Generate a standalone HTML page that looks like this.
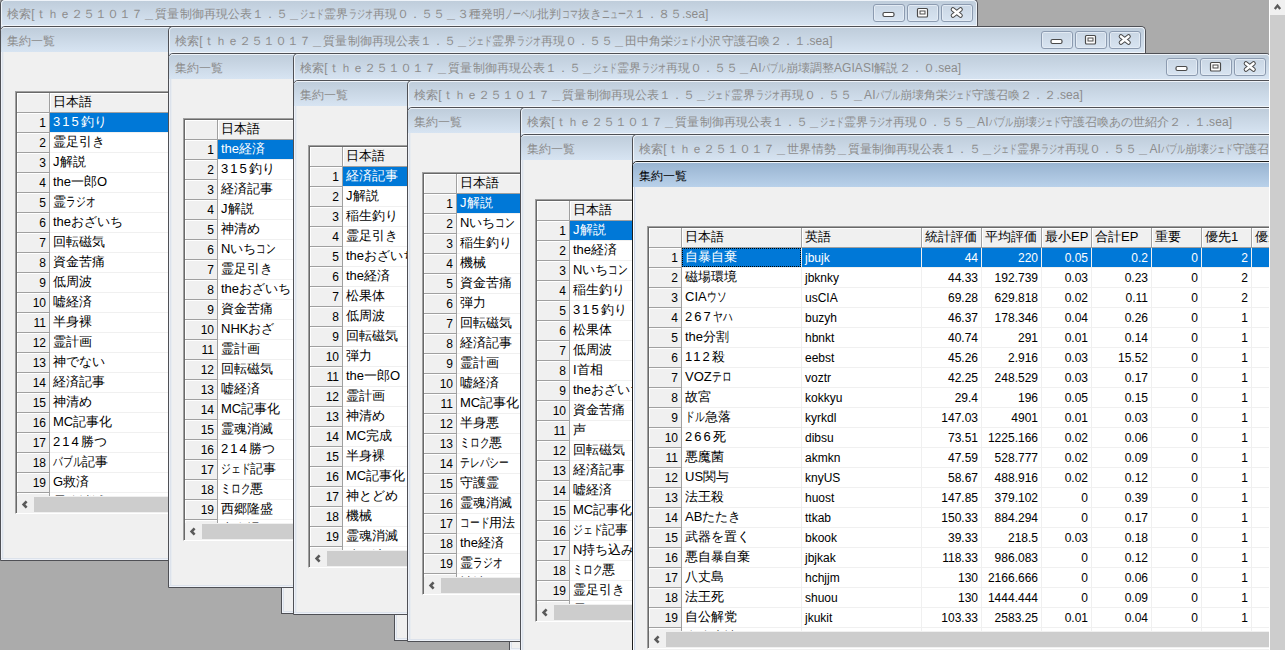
<!DOCTYPE html><html><head><meta charset="utf-8"><style>
*{box-sizing:border-box;margin:0;padding:0}
html,body{width:1285px;height:650px;overflow:hidden;background:#ababab;font-family:"Liberation Sans",sans-serif;font-size:12px;color:#000}
.a{position:absolute}
.pf{position:absolute;width:978px;height:60px;border:1px solid #4f5055;border-bottom:none;border-radius:5px 5px 0 0;overflow:hidden;
 background:linear-gradient(#bfcddb,#d7e4f2) 0 1px/100% 25px no-repeat,#d7e4f2}
.pf .in{position:absolute;left:0;top:0;right:0;height:26px;border:1px solid #eef3f9;border-bottom:none;border-radius:4px 4px 0 0}
.pf .hl{position:absolute;left:0;right:0;top:25px;height:1px;background:#f2f6fb}
.tt{position:absolute;left:6px;top:7px;letter-spacing:0.08px;white-space:nowrap;color:#8c8c8c;line-height:14px}
.btn{position:absolute;top:4px;width:32px;height:18px;border:1px solid #8c9bb0;border-radius:3px;background:linear-gradient(#c9d6e4,#d8e4f1);box-shadow:inset 0 0 0 1px #e3ebf4}
.cf{position:absolute;width:978px;height:535px;border:1px solid #4f5055;border-radius:5px 5px 0 0;overflow:hidden;background:#f0f0f0}
.cf .tb{position:absolute;left:0;top:0;right:0;height:25px;background:linear-gradient(#bfcddb,#d7e4f2);border-top:1px solid #eef3f9;border-radius:4px 4px 0 0}
.cf.act .tb{background:linear-gradient(#99b4d1,#b9d1ea)}
.cf.act{border-color:#1c1c1c}
.cf.act .side{border-left-color:#fff;background:#cdd5e3;border-right-color:#e8eef9}
.cf .side{position:absolute;left:0;top:25px;bottom:0;width:3px;border-left:1px solid #eef2f9;border-right:1px solid #e8ecf0;background:#dce2eb}
.cf .bot{position:absolute;left:0;right:0;bottom:0;height:2px;border-bottom:1px solid #eef2f9;background:#dce2eb}
.ct{position:absolute;left:6px;top:7px;white-space:nowrap;color:#8c8c8c;line-height:14px}
.cf.act .ct{color:#000}
.gw{position:absolute;left:14px;top:64px;height:423px;border-bottom:1px solid #fff;border-top:1px solid #a0a0a0;border-left:1px solid #a0a0a0}
.grid{position:relative;height:421px;border-top:1px solid #696969;border-left:1px solid #696969;background:#fff;overflow:hidden}
.rh{position:absolute;left:0;width:33px;background:#f0f0f0;border-right:1px solid #a0a0a0;border-bottom:1px solid #a0a0a0;text-align:right;padding-right:3px;line-height:21px;height:20px;box-shadow:inset 1px 1px 0 #fff}
.hc{position:absolute;top:0;height:20px;background:#f0f0f0;box-shadow:inset 1px 1px 0 #fff;border-right:1px solid #a0a0a0;border-bottom:1px solid #a0a0a0;padding-left:3px;line-height:17px;font-size:13px;white-space:nowrap;overflow:hidden}
.dc{position:absolute;height:20px;border-right:1px solid #f0f0f0;border-bottom:1px solid #f0f0f0;line-height:21px;white-space:nowrap;overflow:hidden;padding-left:3px}
.dc.r{text-align:right;padding-left:0;padding-right:3px}
.sel{background:#0078d7;color:#fff}
.jp{font-size:13px;padding-left:3px;line-height:17px}
.kk{display:inline-block;transform:scaleX(.75);transform-origin:0 0}
.dg{letter-spacing:2px}
.hk{display:inline-block;transform:scaleX(.667);transform-origin:0 0;letter-spacing:0}
.fr{position:absolute;left:0;top:0;border:1px dotted #000}

.hs{position:absolute;left:0;right:0;top:403px;height:17px;background:#f0f0f0}
.hs .th{position:absolute;left:17px;top:1px;bottom:1px;right:0;background:#cdcdcd}
</style></head><body><div class="a" style="left:281px;top:587px;width:13px;height:27px;background:#f0f0f0;border-left:1px solid #4f5055;border-bottom:1px solid #4f5055;box-shadow:inset 1px -1px 0 #eef2f9, inset 2px -2px 0 #dce2eb"></div><div class="a" style="left:394px;top:614px;width:14px;height:27px;background:#f0f0f0;border-left:1px solid #4f5055;border-bottom:1px solid #4f5055;box-shadow:inset 1px -1px 0 #eef2f9, inset 2px -2px 0 #dce2eb"></div><div class="a" style="left:509px;top:641px;width:12px;height:10px;background:#f0f0f0;border-left:1px solid #4f5055;border-bottom:1px solid #4f5055;box-shadow:inset 1px -1px 0 #eef2f9, inset 2px -2px 0 #dce2eb"></div><div class="pf" style="left:0px;top:-1px"><div class="in"></div><div class="hl"></div><div class="tt">検索[ｔｈｅ２５１０１７＿質量制御再現公表１．５＿<span class="hk" style="margin-right:-12px">ジェド</span>霊界<span class="hk" style="margin-right:-12px">ラジオ</span>再現０．５５＿３種発明<span class="hk" style="margin-right:-16px">ノーベル</span>批判<span class="hk" style="margin-right:-8px">コマ</span>抜き<span class="hk" style="margin-right:-16px">ニュース</span>１．８５.sea]</div><div class="btn" style="left:872px;top:4px"></div><div class="btn" style="left:906px;top:4px"></div><div class="btn" style="left:940px;top:4px"></div><svg class="a" style="left:872px;top:4px" width="32" height="18"><rect x="10" y="8.5" width="11" height="4" rx="1.5" fill="#fff" stroke="#4a4a4a" stroke-width="1.2"/></svg><svg class="a" style="left:906px;top:4px" width="32" height="18"><rect x="10.5" y="4.5" width="10" height="8.5" rx="1" fill="#fff" stroke="#4a4a4a" stroke-width="1.2"/><rect x="13" y="7" width="5" height="3" fill="none" stroke="#4a4a4a" stroke-width="1"/></svg><svg class="a" style="left:940px;top:4px" width="32" height="18"><path d="M12 5.5 L19.5 11.5 M19.5 5.5 L12 11.5" stroke="#4a4a4a" stroke-width="4.6" stroke-linecap="round"/><path d="M12 5.5 L19.5 11.5 M19.5 5.5 L12 11.5" stroke="#fff" stroke-width="2.6" stroke-linecap="round"/></svg></div><div class="cf" style="left:0px;top:26px"><div class="tb"></div><div class="side"></div><div class="bot"></div><div class="ct">集約一覧</div><div class="gw" style="width:354px"><div class="grid"><div class="rh" style="top:0;height:20px"></div><div class="hc" style="left:33px;width:120px">日本語</div><div class="rh" style="top:20px">1</div><div class="dc jp sel" style="left:33px;top:20px;width:120px"><span class="dg">315</span>釣り</div><div class="rh" style="top:40px">2</div><div class="dc jp" style="left:33px;top:40px;width:120px">霊足引き</div><div class="rh" style="top:60px">3</div><div class="dc jp" style="left:33px;top:60px;width:120px">J解説</div><div class="rh" style="top:80px">4</div><div class="dc jp" style="left:33px;top:80px;width:120px">the一郎O</div><div class="rh" style="top:100px">5</div><div class="dc jp" style="left:33px;top:100px;width:120px">霊<span class="kk" style="margin-right:-9.75px">ラジオ</span></div><div class="rh" style="top:120px">6</div><div class="dc jp" style="left:33px;top:120px;width:120px">theおざいち</div><div class="rh" style="top:140px">7</div><div class="dc jp" style="left:33px;top:140px;width:120px">回転磁気</div><div class="rh" style="top:160px">8</div><div class="dc jp" style="left:33px;top:160px;width:120px">資金苦痛</div><div class="rh" style="top:180px">9</div><div class="dc jp" style="left:33px;top:180px;width:120px">低周波</div><div class="rh" style="top:200px">10</div><div class="dc jp" style="left:33px;top:200px;width:120px">嘘経済</div><div class="rh" style="top:220px">11</div><div class="dc jp" style="left:33px;top:220px;width:120px">半身裸</div><div class="rh" style="top:240px">12</div><div class="dc jp" style="left:33px;top:240px;width:120px">霊計画</div><div class="rh" style="top:260px">13</div><div class="dc jp" style="left:33px;top:260px;width:120px">神でない</div><div class="rh" style="top:280px">14</div><div class="dc jp" style="left:33px;top:280px;width:120px">経済記事</div><div class="rh" style="top:300px">15</div><div class="dc jp" style="left:33px;top:300px;width:120px">神清め</div><div class="rh" style="top:320px">16</div><div class="dc jp" style="left:33px;top:320px;width:120px">MC記事化</div><div class="rh" style="top:340px">17</div><div class="dc jp" style="left:33px;top:340px;width:120px"><span class="dg">214</span>勝つ</div><div class="rh" style="top:360px">18</div><div class="dc jp" style="left:33px;top:360px;width:120px"><span class="kk" style="margin-right:-9.75px">バブル</span>記事</div><div class="rh" style="top:380px">19</div><div class="dc jp" style="left:33px;top:380px;width:120px">G救済</div><div class="rh" style="top:400px">20</div><div class="dc jp" style="left:33px;top:400px;width:120px">霊魂消滅</div><div class="hs"><svg class="a" style="left:0;top:0" width="17" height="17"><path d="M9.6 5.4 L6.6 8.5 L9.6 11.6" fill="none" stroke="#5a5a5a" stroke-width="2.6"/></svg><div class="th"></div></div></div></div></div><div class="pf" style="left:168px;top:26px"><div class="in"></div><div class="hl"></div><div class="tt">検索[ｔｈｅ２５１０１７＿質量制御再現公表１．５＿<span class="hk" style="margin-right:-12px">ジェド</span>霊界<span class="hk" style="margin-right:-12px">ラジオ</span>再現０．５５＿田中角栄<span class="hk" style="margin-right:-12px">ジェド</span>小沢守護召喚２．１.sea]</div><div class="btn" style="left:872px;top:4px"></div><div class="btn" style="left:906px;top:4px"></div><div class="btn" style="left:940px;top:4px"></div><svg class="a" style="left:872px;top:4px" width="32" height="18"><rect x="10" y="8.5" width="11" height="4" rx="1.5" fill="#fff" stroke="#4a4a4a" stroke-width="1.2"/></svg><svg class="a" style="left:906px;top:4px" width="32" height="18"><rect x="10.5" y="4.5" width="10" height="8.5" rx="1" fill="#fff" stroke="#4a4a4a" stroke-width="1.2"/><rect x="13" y="7" width="5" height="3" fill="none" stroke="#4a4a4a" stroke-width="1"/></svg><svg class="a" style="left:940px;top:4px" width="32" height="18"><path d="M12 5.5 L19.5 11.5 M19.5 5.5 L12 11.5" stroke="#4a4a4a" stroke-width="4.6" stroke-linecap="round"/><path d="M12 5.5 L19.5 11.5 M19.5 5.5 L12 11.5" stroke="#fff" stroke-width="2.6" stroke-linecap="round"/></svg></div><div class="cf" style="left:168px;top:53px"><div class="tb"></div><div class="side"></div><div class="bot"></div><div class="ct">集約一覧</div><div class="gw" style="width:354px"><div class="grid"><div class="rh" style="top:0;height:20px"></div><div class="hc" style="left:33px;width:120px">日本語</div><div class="rh" style="top:20px">1</div><div class="dc jp sel" style="left:33px;top:20px;width:120px">the経済</div><div class="rh" style="top:40px">2</div><div class="dc jp" style="left:33px;top:40px;width:120px"><span class="dg">315</span>釣り</div><div class="rh" style="top:60px">3</div><div class="dc jp" style="left:33px;top:60px;width:120px">経済記事</div><div class="rh" style="top:80px">4</div><div class="dc jp" style="left:33px;top:80px;width:120px">J解説</div><div class="rh" style="top:100px">5</div><div class="dc jp" style="left:33px;top:100px;width:120px">神清め</div><div class="rh" style="top:120px">6</div><div class="dc jp" style="left:33px;top:120px;width:120px">Nいち<span class="kk" style="margin-right:-6.50px">コン</span></div><div class="rh" style="top:140px">7</div><div class="dc jp" style="left:33px;top:140px;width:120px">霊足引き</div><div class="rh" style="top:160px">8</div><div class="dc jp" style="left:33px;top:160px;width:120px">theおざいち</div><div class="rh" style="top:180px">9</div><div class="dc jp" style="left:33px;top:180px;width:120px">資金苦痛</div><div class="rh" style="top:200px">10</div><div class="dc jp" style="left:33px;top:200px;width:120px">NHKおざ</div><div class="rh" style="top:220px">11</div><div class="dc jp" style="left:33px;top:220px;width:120px">霊計画</div><div class="rh" style="top:240px">12</div><div class="dc jp" style="left:33px;top:240px;width:120px">回転磁気</div><div class="rh" style="top:260px">13</div><div class="dc jp" style="left:33px;top:260px;width:120px">嘘経済</div><div class="rh" style="top:280px">14</div><div class="dc jp" style="left:33px;top:280px;width:120px">MC記事化</div><div class="rh" style="top:300px">15</div><div class="dc jp" style="left:33px;top:300px;width:120px">霊魂消滅</div><div class="rh" style="top:320px">16</div><div class="dc jp" style="left:33px;top:320px;width:120px"><span class="dg">214</span>勝つ</div><div class="rh" style="top:340px">17</div><div class="dc jp" style="left:33px;top:340px;width:120px"><span class="kk" style="margin-right:-9.75px">ジェド</span>記事</div><div class="rh" style="top:360px">18</div><div class="dc jp" style="left:33px;top:360px;width:120px"><span class="kk" style="margin-right:-9.75px">ミロク</span>悪</div><div class="rh" style="top:380px">19</div><div class="dc jp" style="left:33px;top:380px;width:120px">西郷隆盛</div><div class="rh" style="top:400px">20</div><div class="dc jp" style="left:33px;top:400px;width:120px">半身裸</div><div class="hs"><svg class="a" style="left:0;top:0" width="17" height="17"><path d="M9.6 5.4 L6.6 8.5 L9.6 11.6" fill="none" stroke="#5a5a5a" stroke-width="2.6"/></svg><div class="th"></div></div></div></div></div><div class="pf" style="left:293px;top:53px"><div class="in"></div><div class="hl"></div><div class="tt">検索[ｔｈｅ２５１０１７＿質量制御再現公表１．５＿<span class="hk" style="margin-right:-12px">ジェド</span>霊界<span class="hk" style="margin-right:-12px">ラジオ</span>再現０．５５＿AI<span class="hk" style="margin-right:-12px">バブル</span>崩壊調整AGIASI解説２．０.sea]</div><div class="btn" style="left:872px;top:4px"></div><div class="btn" style="left:906px;top:4px"></div><div class="btn" style="left:940px;top:4px"></div><svg class="a" style="left:872px;top:4px" width="32" height="18"><rect x="10" y="8.5" width="11" height="4" rx="1.5" fill="#fff" stroke="#4a4a4a" stroke-width="1.2"/></svg><svg class="a" style="left:906px;top:4px" width="32" height="18"><rect x="10.5" y="4.5" width="10" height="8.5" rx="1" fill="#fff" stroke="#4a4a4a" stroke-width="1.2"/><rect x="13" y="7" width="5" height="3" fill="none" stroke="#4a4a4a" stroke-width="1"/></svg><svg class="a" style="left:940px;top:4px" width="32" height="18"><path d="M12 5.5 L19.5 11.5 M19.5 5.5 L12 11.5" stroke="#4a4a4a" stroke-width="4.6" stroke-linecap="round"/><path d="M12 5.5 L19.5 11.5 M19.5 5.5 L12 11.5" stroke="#fff" stroke-width="2.6" stroke-linecap="round"/></svg></div><div class="cf" style="left:293px;top:80px"><div class="tb"></div><div class="side"></div><div class="bot"></div><div class="ct">集約一覧</div><div class="gw" style="width:354px"><div class="grid"><div class="rh" style="top:0;height:20px"></div><div class="hc" style="left:33px;width:120px">日本語</div><div class="rh" style="top:20px">1</div><div class="dc jp sel" style="left:33px;top:20px;width:120px">経済記事</div><div class="rh" style="top:40px">2</div><div class="dc jp" style="left:33px;top:40px;width:120px">J解説</div><div class="rh" style="top:60px">3</div><div class="dc jp" style="left:33px;top:60px;width:120px">稲生釣り</div><div class="rh" style="top:80px">4</div><div class="dc jp" style="left:33px;top:80px;width:120px">霊足引き</div><div class="rh" style="top:100px">5</div><div class="dc jp" style="left:33px;top:100px;width:120px">theおざいち</div><div class="rh" style="top:120px">6</div><div class="dc jp" style="left:33px;top:120px;width:120px">the経済</div><div class="rh" style="top:140px">7</div><div class="dc jp" style="left:33px;top:140px;width:120px">松果体</div><div class="rh" style="top:160px">8</div><div class="dc jp" style="left:33px;top:160px;width:120px">低周波</div><div class="rh" style="top:180px">9</div><div class="dc jp" style="left:33px;top:180px;width:120px">回転磁気</div><div class="rh" style="top:200px">10</div><div class="dc jp" style="left:33px;top:200px;width:120px">弾力</div><div class="rh" style="top:220px">11</div><div class="dc jp" style="left:33px;top:220px;width:120px">the一郎O</div><div class="rh" style="top:240px">12</div><div class="dc jp" style="left:33px;top:240px;width:120px">霊計画</div><div class="rh" style="top:260px">13</div><div class="dc jp" style="left:33px;top:260px;width:120px">神清め</div><div class="rh" style="top:280px">14</div><div class="dc jp" style="left:33px;top:280px;width:120px">MC完成</div><div class="rh" style="top:300px">15</div><div class="dc jp" style="left:33px;top:300px;width:120px">半身裸</div><div class="rh" style="top:320px">16</div><div class="dc jp" style="left:33px;top:320px;width:120px">MC記事化</div><div class="rh" style="top:340px">17</div><div class="dc jp" style="left:33px;top:340px;width:120px">神とどめ</div><div class="rh" style="top:360px">18</div><div class="dc jp" style="left:33px;top:360px;width:120px">機械</div><div class="rh" style="top:380px">19</div><div class="dc jp" style="left:33px;top:380px;width:120px">霊魂消滅</div><div class="rh" style="top:400px">20</div><div class="dc jp" style="left:33px;top:400px;width:120px">嘘経済</div><div class="hs"><svg class="a" style="left:0;top:0" width="17" height="17"><path d="M9.6 5.4 L6.6 8.5 L9.6 11.6" fill="none" stroke="#5a5a5a" stroke-width="2.6"/></svg><div class="th"></div></div></div></div></div><div class="pf" style="left:407px;top:80px"><div class="in"></div><div class="hl"></div><div class="tt">検索[ｔｈｅ２５１０１７＿質量制御再現公表１．５＿<span class="hk" style="margin-right:-12px">ジェド</span>霊界<span class="hk" style="margin-right:-12px">ラジオ</span>再現０．５５＿AI<span class="hk" style="margin-right:-12px">バブル</span>崩壊角栄<span class="hk" style="margin-right:-12px">ジェド</span>守護召喚２．２.sea]</div><div class="btn" style="left:872px;top:4px"></div><div class="btn" style="left:906px;top:4px"></div><div class="btn" style="left:940px;top:4px"></div><svg class="a" style="left:872px;top:4px" width="32" height="18"><rect x="10" y="8.5" width="11" height="4" rx="1.5" fill="#fff" stroke="#4a4a4a" stroke-width="1.2"/></svg><svg class="a" style="left:906px;top:4px" width="32" height="18"><rect x="10.5" y="4.5" width="10" height="8.5" rx="1" fill="#fff" stroke="#4a4a4a" stroke-width="1.2"/><rect x="13" y="7" width="5" height="3" fill="none" stroke="#4a4a4a" stroke-width="1"/></svg><svg class="a" style="left:940px;top:4px" width="32" height="18"><path d="M12 5.5 L19.5 11.5 M19.5 5.5 L12 11.5" stroke="#4a4a4a" stroke-width="4.6" stroke-linecap="round"/><path d="M12 5.5 L19.5 11.5 M19.5 5.5 L12 11.5" stroke="#fff" stroke-width="2.6" stroke-linecap="round"/></svg></div><div class="cf" style="left:407px;top:107px"><div class="tb"></div><div class="side"></div><div class="bot"></div><div class="ct">集約一覧</div><div class="gw" style="width:354px"><div class="grid"><div class="rh" style="top:0;height:20px"></div><div class="hc" style="left:33px;width:120px">日本語</div><div class="rh" style="top:20px">1</div><div class="dc jp sel" style="left:33px;top:20px;width:120px">J解説</div><div class="rh" style="top:40px">2</div><div class="dc jp" style="left:33px;top:40px;width:120px">Nいち<span class="kk" style="margin-right:-6.50px">コン</span></div><div class="rh" style="top:60px">3</div><div class="dc jp" style="left:33px;top:60px;width:120px">稲生釣り</div><div class="rh" style="top:80px">4</div><div class="dc jp" style="left:33px;top:80px;width:120px">機械</div><div class="rh" style="top:100px">5</div><div class="dc jp" style="left:33px;top:100px;width:120px">資金苦痛</div><div class="rh" style="top:120px">6</div><div class="dc jp" style="left:33px;top:120px;width:120px">弾力</div><div class="rh" style="top:140px">7</div><div class="dc jp" style="left:33px;top:140px;width:120px">回転磁気</div><div class="rh" style="top:160px">8</div><div class="dc jp" style="left:33px;top:160px;width:120px">経済記事</div><div class="rh" style="top:180px">9</div><div class="dc jp" style="left:33px;top:180px;width:120px">霊計画</div><div class="rh" style="top:200px">10</div><div class="dc jp" style="left:33px;top:200px;width:120px">嘘経済</div><div class="rh" style="top:220px">11</div><div class="dc jp" style="left:33px;top:220px;width:120px">MC記事化</div><div class="rh" style="top:240px">12</div><div class="dc jp" style="left:33px;top:240px;width:120px">半身悪</div><div class="rh" style="top:260px">13</div><div class="dc jp" style="left:33px;top:260px;width:120px"><span class="kk" style="margin-right:-9.75px">ミロク</span>悪</div><div class="rh" style="top:280px">14</div><div class="dc jp" style="left:33px;top:280px;width:120px"><span class="kk" style="margin-right:-16.25px">テレパシー</span></div><div class="rh" style="top:300px">15</div><div class="dc jp" style="left:33px;top:300px;width:120px">守護霊</div><div class="rh" style="top:320px">16</div><div class="dc jp" style="left:33px;top:320px;width:120px">霊魂消滅</div><div class="rh" style="top:340px">17</div><div class="dc jp" style="left:33px;top:340px;width:120px"><span class="kk" style="margin-right:-9.75px">コード</span>用法</div><div class="rh" style="top:360px">18</div><div class="dc jp" style="left:33px;top:360px;width:120px">the経済</div><div class="rh" style="top:380px">19</div><div class="dc jp" style="left:33px;top:380px;width:120px">霊<span class="kk" style="margin-right:-9.75px">ラジオ</span></div><div class="rh" style="top:400px">20</div><div class="dc jp" style="left:33px;top:400px;width:120px">神清め</div><div class="hs"><svg class="a" style="left:0;top:0" width="17" height="17"><path d="M9.6 5.4 L6.6 8.5 L9.6 11.6" fill="none" stroke="#5a5a5a" stroke-width="2.6"/></svg><div class="th"></div></div></div></div></div><div class="pf" style="left:520px;top:107px"><div class="in"></div><div class="hl"></div><div class="tt">検索[ｔｈｅ２５１０１７＿質量制御再現公表１．５＿<span class="hk" style="margin-right:-12px">ジェド</span>霊界<span class="hk" style="margin-right:-12px">ラジオ</span>再現０．５５＿AI<span class="hk" style="margin-right:-12px">バブル</span>崩壊<span class="hk" style="margin-right:-12px">ジェド</span>守護召喚あの世紹介２．１.sea]</div><div class="btn" style="left:872px;top:4px"></div><div class="btn" style="left:906px;top:4px"></div><div class="btn" style="left:940px;top:4px"></div><svg class="a" style="left:872px;top:4px" width="32" height="18"><rect x="10" y="8.5" width="11" height="4" rx="1.5" fill="#fff" stroke="#4a4a4a" stroke-width="1.2"/></svg><svg class="a" style="left:906px;top:4px" width="32" height="18"><rect x="10.5" y="4.5" width="10" height="8.5" rx="1" fill="#fff" stroke="#4a4a4a" stroke-width="1.2"/><rect x="13" y="7" width="5" height="3" fill="none" stroke="#4a4a4a" stroke-width="1"/></svg><svg class="a" style="left:940px;top:4px" width="32" height="18"><path d="M12 5.5 L19.5 11.5 M19.5 5.5 L12 11.5" stroke="#4a4a4a" stroke-width="4.6" stroke-linecap="round"/><path d="M12 5.5 L19.5 11.5 M19.5 5.5 L12 11.5" stroke="#fff" stroke-width="2.6" stroke-linecap="round"/></svg></div><div class="cf" style="left:520px;top:134px"><div class="tb"></div><div class="side"></div><div class="bot"></div><div class="ct">集約一覧</div><div class="gw" style="width:354px"><div class="grid"><div class="rh" style="top:0;height:20px"></div><div class="hc" style="left:33px;width:120px">日本語</div><div class="rh" style="top:20px">1</div><div class="dc jp sel" style="left:33px;top:20px;width:120px">J解説</div><div class="rh" style="top:40px">2</div><div class="dc jp" style="left:33px;top:40px;width:120px">the経済</div><div class="rh" style="top:60px">3</div><div class="dc jp" style="left:33px;top:60px;width:120px">Nいち<span class="kk" style="margin-right:-6.50px">コン</span></div><div class="rh" style="top:80px">4</div><div class="dc jp" style="left:33px;top:80px;width:120px">稲生釣り</div><div class="rh" style="top:100px">5</div><div class="dc jp" style="left:33px;top:100px;width:120px"><span class="dg">315</span>釣り</div><div class="rh" style="top:120px">6</div><div class="dc jp" style="left:33px;top:120px;width:120px">松果体</div><div class="rh" style="top:140px">7</div><div class="dc jp" style="left:33px;top:140px;width:120px">低周波</div><div class="rh" style="top:160px">8</div><div class="dc jp" style="left:33px;top:160px;width:120px">I首相</div><div class="rh" style="top:180px">9</div><div class="dc jp" style="left:33px;top:180px;width:120px">theおざいち</div><div class="rh" style="top:200px">10</div><div class="dc jp" style="left:33px;top:200px;width:120px">資金苦痛</div><div class="rh" style="top:220px">11</div><div class="dc jp" style="left:33px;top:220px;width:120px">声</div><div class="rh" style="top:240px">12</div><div class="dc jp" style="left:33px;top:240px;width:120px">回転磁気</div><div class="rh" style="top:260px">13</div><div class="dc jp" style="left:33px;top:260px;width:120px">経済記事</div><div class="rh" style="top:280px">14</div><div class="dc jp" style="left:33px;top:280px;width:120px">嘘経済</div><div class="rh" style="top:300px">15</div><div class="dc jp" style="left:33px;top:300px;width:120px">MC記事化</div><div class="rh" style="top:320px">16</div><div class="dc jp" style="left:33px;top:320px;width:120px"><span class="kk" style="margin-right:-9.75px">ジェド</span>記事</div><div class="rh" style="top:340px">17</div><div class="dc jp" style="left:33px;top:340px;width:120px">N持ち込み</div><div class="rh" style="top:360px">18</div><div class="dc jp" style="left:33px;top:360px;width:120px"><span class="kk" style="margin-right:-9.75px">ミロク</span>悪</div><div class="rh" style="top:380px">19</div><div class="dc jp" style="left:33px;top:380px;width:120px">霊足引き</div><div class="rh" style="top:400px">20</div><div class="dc jp" style="left:33px;top:400px;width:120px">霊<span class="kk" style="margin-right:-9.75px">ラジオ</span></div><div class="hs"><svg class="a" style="left:0;top:0" width="17" height="17"><path d="M9.6 5.4 L6.6 8.5 L9.6 11.6" fill="none" stroke="#5a5a5a" stroke-width="2.6"/></svg><div class="th"></div></div></div></div></div><div class="pf" style="left:632px;top:134px"><div class="in"></div><div class="hl"></div><div class="tt">検索[ｔｈｅ２５１０１７＿世界情勢＿質量制御再現公表１．５＿<span class="hk" style="margin-right:-12px">ジェド</span>霊界<span class="hk" style="margin-right:-12px">ラジオ</span>再現０．５５＿AI<span class="hk" style="margin-right:-12px">バブル</span>崩壊<span class="hk" style="margin-right:-12px">ジェド</span>守護召喚あの世紹介２．１.sea]</div><div class="btn" style="left:872px;top:4px"></div><div class="btn" style="left:906px;top:4px"></div><div class="btn" style="left:940px;top:4px"></div><svg class="a" style="left:872px;top:4px" width="32" height="18"><rect x="10" y="8.5" width="11" height="4" rx="1.5" fill="#fff" stroke="#4a4a4a" stroke-width="1.2"/></svg><svg class="a" style="left:906px;top:4px" width="32" height="18"><rect x="10.5" y="4.5" width="10" height="8.5" rx="1" fill="#fff" stroke="#4a4a4a" stroke-width="1.2"/><rect x="13" y="7" width="5" height="3" fill="none" stroke="#4a4a4a" stroke-width="1"/></svg><svg class="a" style="left:940px;top:4px" width="32" height="18"><path d="M12 5.5 L19.5 11.5 M19.5 5.5 L12 11.5" stroke="#4a4a4a" stroke-width="4.6" stroke-linecap="round"/><path d="M12 5.5 L19.5 11.5 M19.5 5.5 L12 11.5" stroke="#fff" stroke-width="2.6" stroke-linecap="round"/></svg></div><div class="cf act" style="left:632px;top:161px"><div class="tb"></div><div class="side"></div><div class="bot"></div><div class="ct">集約一覧</div><div class="gw" style="width:854px"><div class="grid"><div class="rh" style="top:0;height:20px"></div><div class="hc" style="left:33px;width:120px">日本語</div><div class="hc" style="left:153px;width:120px">英語</div><div class="hc" style="left:273px;width:60px">統計評価</div><div class="hc" style="left:333px;width:60px">平均評価</div><div class="hc" style="left:393px;width:50px">最小EP</div><div class="hc" style="left:443px;width:60px">合計EP</div><div class="hc" style="left:503px;width:50px">重要</div><div class="hc" style="left:553px;width:50px">優先1</div><div class="hc" style="left:603px;width:50px">優先2</div><div class="rh" style="top:20px">1</div><div class="dc jp sel" style="left:33px;top:20px;width:120px"><div class="fr" style="width:119px;height:19px"></div>自暴自棄</div><div class="dc sel" style="left:153px;top:20px;width:120px">jbujk</div><div class="dc r sel" style="left:273px;top:20px;width:60px">44</div><div class="dc r sel" style="left:333px;top:20px;width:60px">220</div><div class="dc r sel" style="left:393px;top:20px;width:50px">0.05</div><div class="dc r sel" style="left:443px;top:20px;width:60px">0.2</div><div class="dc r sel" style="left:503px;top:20px;width:50px">0</div><div class="dc r sel" style="left:553px;top:20px;width:50px">2</div><div class="dc r sel" style="left:603px;top:20px;width:50px">1</div><div class="rh" style="top:40px">2</div><div class="dc jp" style="left:33px;top:40px;width:120px">磁場環境</div><div class="dc" style="left:153px;top:40px;width:120px">jbknky</div><div class="dc r" style="left:273px;top:40px;width:60px">44.33</div><div class="dc r" style="left:333px;top:40px;width:60px">192.739</div><div class="dc r" style="left:393px;top:40px;width:50px">0.03</div><div class="dc r" style="left:443px;top:40px;width:60px">0.23</div><div class="dc r" style="left:503px;top:40px;width:50px">0</div><div class="dc r" style="left:553px;top:40px;width:50px">2</div><div class="dc r" style="left:603px;top:40px;width:50px">1</div><div class="rh" style="top:60px">3</div><div class="dc jp" style="left:33px;top:60px;width:120px">CIA<span class="kk" style="margin-right:-6.50px">ウソ</span></div><div class="dc" style="left:153px;top:60px;width:120px">usCIA</div><div class="dc r" style="left:273px;top:60px;width:60px">69.28</div><div class="dc r" style="left:333px;top:60px;width:60px">629.818</div><div class="dc r" style="left:393px;top:60px;width:50px">0.02</div><div class="dc r" style="left:443px;top:60px;width:60px">0.11</div><div class="dc r" style="left:503px;top:60px;width:50px">0</div><div class="dc r" style="left:553px;top:60px;width:50px">2</div><div class="dc r" style="left:603px;top:60px;width:50px">1</div><div class="rh" style="top:80px">4</div><div class="dc jp" style="left:33px;top:80px;width:120px"><span class="dg">267</span><span class="kk" style="margin-right:-6.50px">ヤハ</span></div><div class="dc" style="left:153px;top:80px;width:120px">buzyh</div><div class="dc r" style="left:273px;top:80px;width:60px">46.37</div><div class="dc r" style="left:333px;top:80px;width:60px">178.346</div><div class="dc r" style="left:393px;top:80px;width:50px">0.04</div><div class="dc r" style="left:443px;top:80px;width:60px">0.26</div><div class="dc r" style="left:503px;top:80px;width:50px">0</div><div class="dc r" style="left:553px;top:80px;width:50px">1</div><div class="dc r" style="left:603px;top:80px;width:50px">1</div><div class="rh" style="top:100px">5</div><div class="dc jp" style="left:33px;top:100px;width:120px">the分割</div><div class="dc" style="left:153px;top:100px;width:120px">hbnkt</div><div class="dc r" style="left:273px;top:100px;width:60px">40.74</div><div class="dc r" style="left:333px;top:100px;width:60px">291</div><div class="dc r" style="left:393px;top:100px;width:50px">0.01</div><div class="dc r" style="left:443px;top:100px;width:60px">0.14</div><div class="dc r" style="left:503px;top:100px;width:50px">0</div><div class="dc r" style="left:553px;top:100px;width:50px">1</div><div class="dc r" style="left:603px;top:100px;width:50px">1</div><div class="rh" style="top:120px">6</div><div class="dc jp" style="left:33px;top:120px;width:120px"><span class="dg">112</span>殺</div><div class="dc" style="left:153px;top:120px;width:120px">eebst</div><div class="dc r" style="left:273px;top:120px;width:60px">45.26</div><div class="dc r" style="left:333px;top:120px;width:60px">2.916</div><div class="dc r" style="left:393px;top:120px;width:50px">0.03</div><div class="dc r" style="left:443px;top:120px;width:60px">15.52</div><div class="dc r" style="left:503px;top:120px;width:50px">0</div><div class="dc r" style="left:553px;top:120px;width:50px">1</div><div class="dc r" style="left:603px;top:120px;width:50px">1</div><div class="rh" style="top:140px">7</div><div class="dc jp" style="left:33px;top:140px;width:120px">VOZ<span class="kk" style="margin-right:-6.50px">テロ</span></div><div class="dc" style="left:153px;top:140px;width:120px">voztr</div><div class="dc r" style="left:273px;top:140px;width:60px">42.25</div><div class="dc r" style="left:333px;top:140px;width:60px">248.529</div><div class="dc r" style="left:393px;top:140px;width:50px">0.03</div><div class="dc r" style="left:443px;top:140px;width:60px">0.17</div><div class="dc r" style="left:503px;top:140px;width:50px">0</div><div class="dc r" style="left:553px;top:140px;width:50px">1</div><div class="dc r" style="left:603px;top:140px;width:50px">1</div><div class="rh" style="top:160px">8</div><div class="dc jp" style="left:33px;top:160px;width:120px">故宮</div><div class="dc" style="left:153px;top:160px;width:120px">kokkyu</div><div class="dc r" style="left:273px;top:160px;width:60px">29.4</div><div class="dc r" style="left:333px;top:160px;width:60px">196</div><div class="dc r" style="left:393px;top:160px;width:50px">0.05</div><div class="dc r" style="left:443px;top:160px;width:60px">0.15</div><div class="dc r" style="left:503px;top:160px;width:50px">0</div><div class="dc r" style="left:553px;top:160px;width:50px">1</div><div class="dc r" style="left:603px;top:160px;width:50px">1</div><div class="rh" style="top:180px">9</div><div class="dc jp" style="left:33px;top:180px;width:120px"><span class="kk" style="margin-right:-6.50px">ドル</span>急落</div><div class="dc" style="left:153px;top:180px;width:120px">kyrkdl</div><div class="dc r" style="left:273px;top:180px;width:60px">147.03</div><div class="dc r" style="left:333px;top:180px;width:60px">4901</div><div class="dc r" style="left:393px;top:180px;width:50px">0.01</div><div class="dc r" style="left:443px;top:180px;width:60px">0.03</div><div class="dc r" style="left:503px;top:180px;width:50px">0</div><div class="dc r" style="left:553px;top:180px;width:50px">1</div><div class="dc r" style="left:603px;top:180px;width:50px">1</div><div class="rh" style="top:200px">10</div><div class="dc jp" style="left:33px;top:200px;width:120px"><span class="dg">266</span>死</div><div class="dc" style="left:153px;top:200px;width:120px">dibsu</div><div class="dc r" style="left:273px;top:200px;width:60px">73.51</div><div class="dc r" style="left:333px;top:200px;width:60px">1225.166</div><div class="dc r" style="left:393px;top:200px;width:50px">0.02</div><div class="dc r" style="left:443px;top:200px;width:60px">0.06</div><div class="dc r" style="left:503px;top:200px;width:50px">0</div><div class="dc r" style="left:553px;top:200px;width:50px">1</div><div class="dc r" style="left:603px;top:200px;width:50px">1</div><div class="rh" style="top:220px">11</div><div class="dc jp" style="left:33px;top:220px;width:120px">悪魔菌</div><div class="dc" style="left:153px;top:220px;width:120px">akmkn</div><div class="dc r" style="left:273px;top:220px;width:60px">47.59</div><div class="dc r" style="left:333px;top:220px;width:60px">528.777</div><div class="dc r" style="left:393px;top:220px;width:50px">0.02</div><div class="dc r" style="left:443px;top:220px;width:60px">0.09</div><div class="dc r" style="left:503px;top:220px;width:50px">0</div><div class="dc r" style="left:553px;top:220px;width:50px">1</div><div class="dc r" style="left:603px;top:220px;width:50px">1</div><div class="rh" style="top:240px">12</div><div class="dc jp" style="left:33px;top:240px;width:120px">US関与</div><div class="dc" style="left:153px;top:240px;width:120px">knyUS</div><div class="dc r" style="left:273px;top:240px;width:60px">58.67</div><div class="dc r" style="left:333px;top:240px;width:60px">488.916</div><div class="dc r" style="left:393px;top:240px;width:50px">0.02</div><div class="dc r" style="left:443px;top:240px;width:60px">0.12</div><div class="dc r" style="left:503px;top:240px;width:50px">0</div><div class="dc r" style="left:553px;top:240px;width:50px">1</div><div class="dc r" style="left:603px;top:240px;width:50px">1</div><div class="rh" style="top:260px">13</div><div class="dc jp" style="left:33px;top:260px;width:120px">法王殺</div><div class="dc" style="left:153px;top:260px;width:120px">huost</div><div class="dc r" style="left:273px;top:260px;width:60px">147.85</div><div class="dc r" style="left:333px;top:260px;width:60px">379.102</div><div class="dc r" style="left:393px;top:260px;width:50px">0</div><div class="dc r" style="left:443px;top:260px;width:60px">0.39</div><div class="dc r" style="left:503px;top:260px;width:50px">0</div><div class="dc r" style="left:553px;top:260px;width:50px">1</div><div class="dc r" style="left:603px;top:260px;width:50px">1</div><div class="rh" style="top:280px">14</div><div class="dc jp" style="left:33px;top:280px;width:120px">ABたたき</div><div class="dc" style="left:153px;top:280px;width:120px">ttkab</div><div class="dc r" style="left:273px;top:280px;width:60px">150.33</div><div class="dc r" style="left:333px;top:280px;width:60px">884.294</div><div class="dc r" style="left:393px;top:280px;width:50px">0</div><div class="dc r" style="left:443px;top:280px;width:60px">0.17</div><div class="dc r" style="left:503px;top:280px;width:50px">0</div><div class="dc r" style="left:553px;top:280px;width:50px">1</div><div class="dc r" style="left:603px;top:280px;width:50px">1</div><div class="rh" style="top:300px">15</div><div class="dc jp" style="left:33px;top:300px;width:120px">武器を置く</div><div class="dc" style="left:153px;top:300px;width:120px">bkook</div><div class="dc r" style="left:273px;top:300px;width:60px">39.33</div><div class="dc r" style="left:333px;top:300px;width:60px">218.5</div><div class="dc r" style="left:393px;top:300px;width:50px">0.03</div><div class="dc r" style="left:443px;top:300px;width:60px">0.18</div><div class="dc r" style="left:503px;top:300px;width:50px">0</div><div class="dc r" style="left:553px;top:300px;width:50px">1</div><div class="dc r" style="left:603px;top:300px;width:50px">1</div><div class="rh" style="top:320px">16</div><div class="dc jp" style="left:33px;top:320px;width:120px">悪自暴自棄</div><div class="dc" style="left:153px;top:320px;width:120px">jbjkak</div><div class="dc r" style="left:273px;top:320px;width:60px">118.33</div><div class="dc r" style="left:333px;top:320px;width:60px">986.083</div><div class="dc r" style="left:393px;top:320px;width:50px">0</div><div class="dc r" style="left:443px;top:320px;width:60px">0.12</div><div class="dc r" style="left:503px;top:320px;width:50px">0</div><div class="dc r" style="left:553px;top:320px;width:50px">1</div><div class="dc r" style="left:603px;top:320px;width:50px">1</div><div class="rh" style="top:340px">17</div><div class="dc jp" style="left:33px;top:340px;width:120px">八丈島</div><div class="dc" style="left:153px;top:340px;width:120px">hchjjm</div><div class="dc r" style="left:273px;top:340px;width:60px">130</div><div class="dc r" style="left:333px;top:340px;width:60px">2166.666</div><div class="dc r" style="left:393px;top:340px;width:50px">0</div><div class="dc r" style="left:443px;top:340px;width:60px">0.06</div><div class="dc r" style="left:503px;top:340px;width:50px">0</div><div class="dc r" style="left:553px;top:340px;width:50px">1</div><div class="dc r" style="left:603px;top:340px;width:50px">1</div><div class="rh" style="top:360px">18</div><div class="dc jp" style="left:33px;top:360px;width:120px">法王死</div><div class="dc" style="left:153px;top:360px;width:120px">shuou</div><div class="dc r" style="left:273px;top:360px;width:60px">130</div><div class="dc r" style="left:333px;top:360px;width:60px">1444.444</div><div class="dc r" style="left:393px;top:360px;width:50px">0</div><div class="dc r" style="left:443px;top:360px;width:60px">0.09</div><div class="dc r" style="left:503px;top:360px;width:50px">0</div><div class="dc r" style="left:553px;top:360px;width:50px">1</div><div class="dc r" style="left:603px;top:360px;width:50px">1</div><div class="rh" style="top:380px">19</div><div class="dc jp" style="left:33px;top:380px;width:120px">自公解党</div><div class="dc" style="left:153px;top:380px;width:120px">jkukit</div><div class="dc r" style="left:273px;top:380px;width:60px">103.33</div><div class="dc r" style="left:333px;top:380px;width:60px">2583.25</div><div class="dc r" style="left:393px;top:380px;width:50px">0.01</div><div class="dc r" style="left:443px;top:380px;width:60px">0.04</div><div class="dc r" style="left:503px;top:380px;width:50px">0</div><div class="dc r" style="left:553px;top:380px;width:50px">1</div><div class="dc r" style="left:603px;top:380px;width:50px">1</div><div class="rh" style="top:400px">20</div><div class="dc jp" style="left:33px;top:400px;width:120px">自公崩壊</div><div class="dc" style="left:153px;top:400px;width:120px">jkhki</div><div class="dc r" style="left:273px;top:400px;width:60px">101.5</div><div class="dc r" style="left:333px;top:400px;width:60px">1015</div><div class="dc r" style="left:393px;top:400px;width:50px">0</div><div class="dc r" style="left:443px;top:400px;width:60px">0.1</div><div class="dc r" style="left:503px;top:400px;width:50px">0</div><div class="dc r" style="left:553px;top:400px;width:50px">1</div><div class="dc r" style="left:603px;top:400px;width:50px">1</div><div class="hs"><svg class="a" style="left:0;top:0" width="17" height="17"><path d="M9.6 5.4 L6.6 8.5 L9.6 11.6" fill="none" stroke="#5a5a5a" stroke-width="2.6"/></svg><div class="th"></div></div></div></div></div><div class="a" style="left:1269px;top:0;width:1px;height:650px;background:#fff"></div><div class="a" style="left:1270px;top:0;width:15px;height:650px;background:#cdcdcd"></div><div class="a" style="left:1270px;top:0;width:15px;height:15px;background:#f0f0f0"></div><svg class="a" style="left:1270px;top:0" width="15" height="15"><path d="M4.8 9 L7.5 5.6 L10.2 9" fill="none" stroke="#5a5a5a" stroke-width="2.3"/></svg></body></html>
